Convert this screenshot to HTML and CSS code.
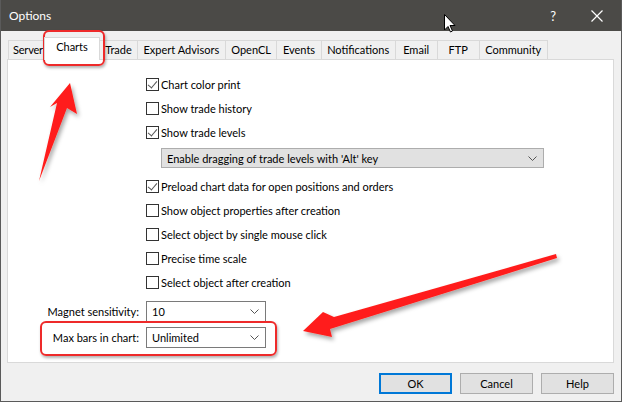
FILE: index.html
```html
<!DOCTYPE html>
<html lang="en">

<head>
    <meta charset="UTF-8">
    <meta name="viewport" content="width=device-width, initial-scale=1.0">
    <title>Options</title>
    <link rel="stylesheet" href="styles.css">
</head>

<body>
    <div class="window">
        <div class="titlebar">
            <span class="title">Options</span>
            <span class="help">?</span>
            <svg class="close" width="12" height="12" viewBox="0 0 12 12">
                <path d="M0.5 0.5 L11.5 11.5 M11.5 0.5 L0.5 11.5" stroke="#fff" stroke-width="1.2" />
            </svg>
        </div>

        <div class="content">
            <div class="tabs">
                <div class="tab tab-server">Server</div>
                <div class="tab active">Charts</div>
                <div class="tab tab-trade">Trade</div>
                <div class="tab">Expert Advisors</div>
                <div class="tab">OpenCL</div>
                <div class="tab">Events</div>
                <div class="tab">Notifications</div>
                <div class="tab">Email</div>
                <div class="tab">FTP</div>
                <div class="tab">Community</div>
            </div>

            <div class="panel">
                <div class="options">
                    <label class="check-row"><span class="box checked"></span>Chart color print</label>
                    <label class="check-row"><span class="box"></span>Show trade history</label>
                    <label class="check-row"><span class="box checked"></span>Show trade levels</label>
                    <div class="combo wide">
                        <span>Enable dragging of trade levels with 'Alt' key</span>
                        <svg width="9" height="5" viewBox="0 0 9 5"><path d="M0.5 0.5 L4.5 4.5 L8.5 0.5" fill="none" stroke="#555" /></svg>
                    </div>
                    <label class="check-row spaced"><span class="box checked"></span>Preload chart data for open positions and orders</label>
                    <label class="check-row"><span class="box"></span>Show object properties after creation</label>
                    <label class="check-row"><span class="box"></span>Select object by single mouse click</label>
                    <label class="check-row"><span class="box"></span>Precise time scale</label>
                    <label class="check-row"><span class="box"></span>Select object after creation</label>
                </div>

                <div class="fields">
                    <span class="field-label">Magnet sensitivity:</span>
                    <div class="combo small">
                        <span>10</span>
                        <svg width="9" height="5" viewBox="0 0 9 5"><path d="M0.5 0.5 L4.5 4.5 L8.5 0.5" fill="none" stroke="#555" /></svg>
                    </div>
                    <span class="field-label">Max bars in chart:</span>
                    <div class="combo small">
                        <span>Unlimited</span>
                        <svg width="9" height="5" viewBox="0 0 9 5"><path d="M0.5 0.5 L4.5 4.5 L8.5 0.5" fill="none" stroke="#555" /></svg>
                    </div>
                </div>
            </div>

            <div class="buttons">
                <div class="btn default">OK</div>
                <div class="btn">Cancel</div>
                <div class="btn">Help</div>
            </div>
        </div>

        <!-- annotations drawn over the dialog -->
        <div class="mark mark-tab"></div>
        <div class="mark mark-bars"></div>
        <svg class="arrows" width="622" height="402" viewBox="0 0 622 402">
            <defs>
                <filter id="shade" x="-20%" y="-20%" width="140%" height="140%">
                    <feDropShadow dx="2" dy="3" stdDeviation="2" flood-color="#000" flood-opacity="0.35" />
                </filter>
            </defs>
            <polygon points="69,83 76,114 66,108 38,181 56,103 49,107" fill="#ff1f1a" filter="url(#shade)" />
            <polygon points="302,331 322,312 333,317 555,254 556,258 329,329 331,337" fill="#ff1f1a" filter="url(#shade)" />
            <path class="cursor" d="M443.5 14.5 L443.5 30 L447 26.5 L449.5 32 L451.5 31 L449 25.5 L454 25.5 Z" fill="#fff" stroke="#000" stroke-width="1" />
        </svg>
    </div>
</body>

</html>
```

FILE: styles.css
```css
* {
    margin: 0;
    padding: 0;
    box-sizing: border-box;
}

body {
    background: #f0f0f0;
    font-family: Lato, "Noto Sans", sans-serif;
    font-size: 11px;
    color: #000;
}

.window {
    position: relative;
    width: 622px;
    height: 402px;
    background: #f0f0f0;
    border: 1px solid #5a5a5a;
    border-top: none;
    overflow: hidden;
}

.titlebar {
    height: 31px;
    background: #4b4a47;
    color: #fff;
    display: flex;
    align-items: center;
    padding: 0 18px 0 8px;
}

.titlebar .title {
    font-size: 12px;
    flex: 1;
}

.titlebar .help {
    font-size: 13px;
    margin-right: 35px;
}

.content {
    padding: 9px 7px 0 6px;
}

.tabs {
    display: flex;
    height: 19px;
    padding-left: 1px;
    align-items: flex-end;
}

.tab {
    height: 19px;
    min-width: 42px;
    line-height: 17px;
    padding: 0 5.5px;
    border: 1px solid #d9d9d9;
    border-bottom: none;
    border-right: none;
    background: #f0f0f0;
    text-align: center;
    white-space: nowrap;
}

.tab:last-child {
    border-right: 1px solid #d9d9d9;
}

.tab-server {
    width: 38px;
    min-width: 0;
    padding: 0 0 0 4px;
    text-align: left;
    letter-spacing: -0.2px;
}

.tab.active {
    position: relative;
    width: 56px;
    height: 23px;
    margin: -4px 0 -1px -2px;
    line-height: 18px;
    padding: 0;
    background: #fff;
    border-right: 1px solid #d9d9d9;
    z-index: 1;
}

.tab-trade {
    width: 37px;
    min-width: 0;
    border-left: none;
    padding: 0;
}

.panel {
    height: 304px;
    background: #fff;
    border: 1px solid #d9d9d9;
    padding-top: 12px;
}

.options {
    display: flex;
    flex-direction: column;
    margin-left: 138px;
}

.check-row {
    display: flex;
    align-items: center;
    height: 24px;
    gap: 2px;
}

.check-row.spaced {
    margin-top: 6px;
}

.box {
    width: 13px;
    height: 13px;
    border: 1px solid #333;
    background: #fff;
    position: relative;
}

.box.checked::after {
    content: "";
    position: absolute;
    left: 3px;
    top: 0px;
    width: 4px;
    height: 8px;
    border: solid #555;
    border-width: 0 1px 1px 0;
    transform: rotate(40deg);
}

.combo {
    display: flex;
    align-items: center;
    justify-content: space-between;
    height: 21px;
    padding: 0 6px 0 5px;
    border: 1px solid #7a7a7a;
    background: #fff;
}

.combo.wide {
    width: 383px;
    height: 20px;
    margin: 4px 0 0 15px;
    background: #e1e1e1;
    border-color: #adadad;
}

.fields {
    display: grid;
    grid-template-columns: 131px 120px;
    column-gap: 7px;
    row-gap: 5px;
    align-items: center;
    margin-top: 7px;
}

.field-label {
    text-align: right;
    white-space: nowrap;
}

.buttons {
    display: flex;
    justify-content: flex-end;
    gap: 8px;
    margin-top: 10px;
}

.btn {
    width: 73px;
    height: 21px;
    line-height: 19px;
    text-align: center;
    background: #e1e1e1;
    border: 1px solid #adadad;
}

.btn.default {
    border: 2px solid #0078d7;
    line-height: 17px;
}

.mark {
    position: absolute;
    border: 2px solid #ee2a2a;
    border-radius: 6px;
    box-shadow: 1px 2px 3px rgba(0, 0, 0, 0.3);
}

.mark-tab {
    left: 42px;
    top: 30px;
    width: 62px;
    height: 36px;
}

.mark-bars {
    left: 39px;
    top: 321px;
    width: 237px;
    height: 35px;
}

.arrows {
    position: absolute;
    left: 0;
    top: 0;
}
```
